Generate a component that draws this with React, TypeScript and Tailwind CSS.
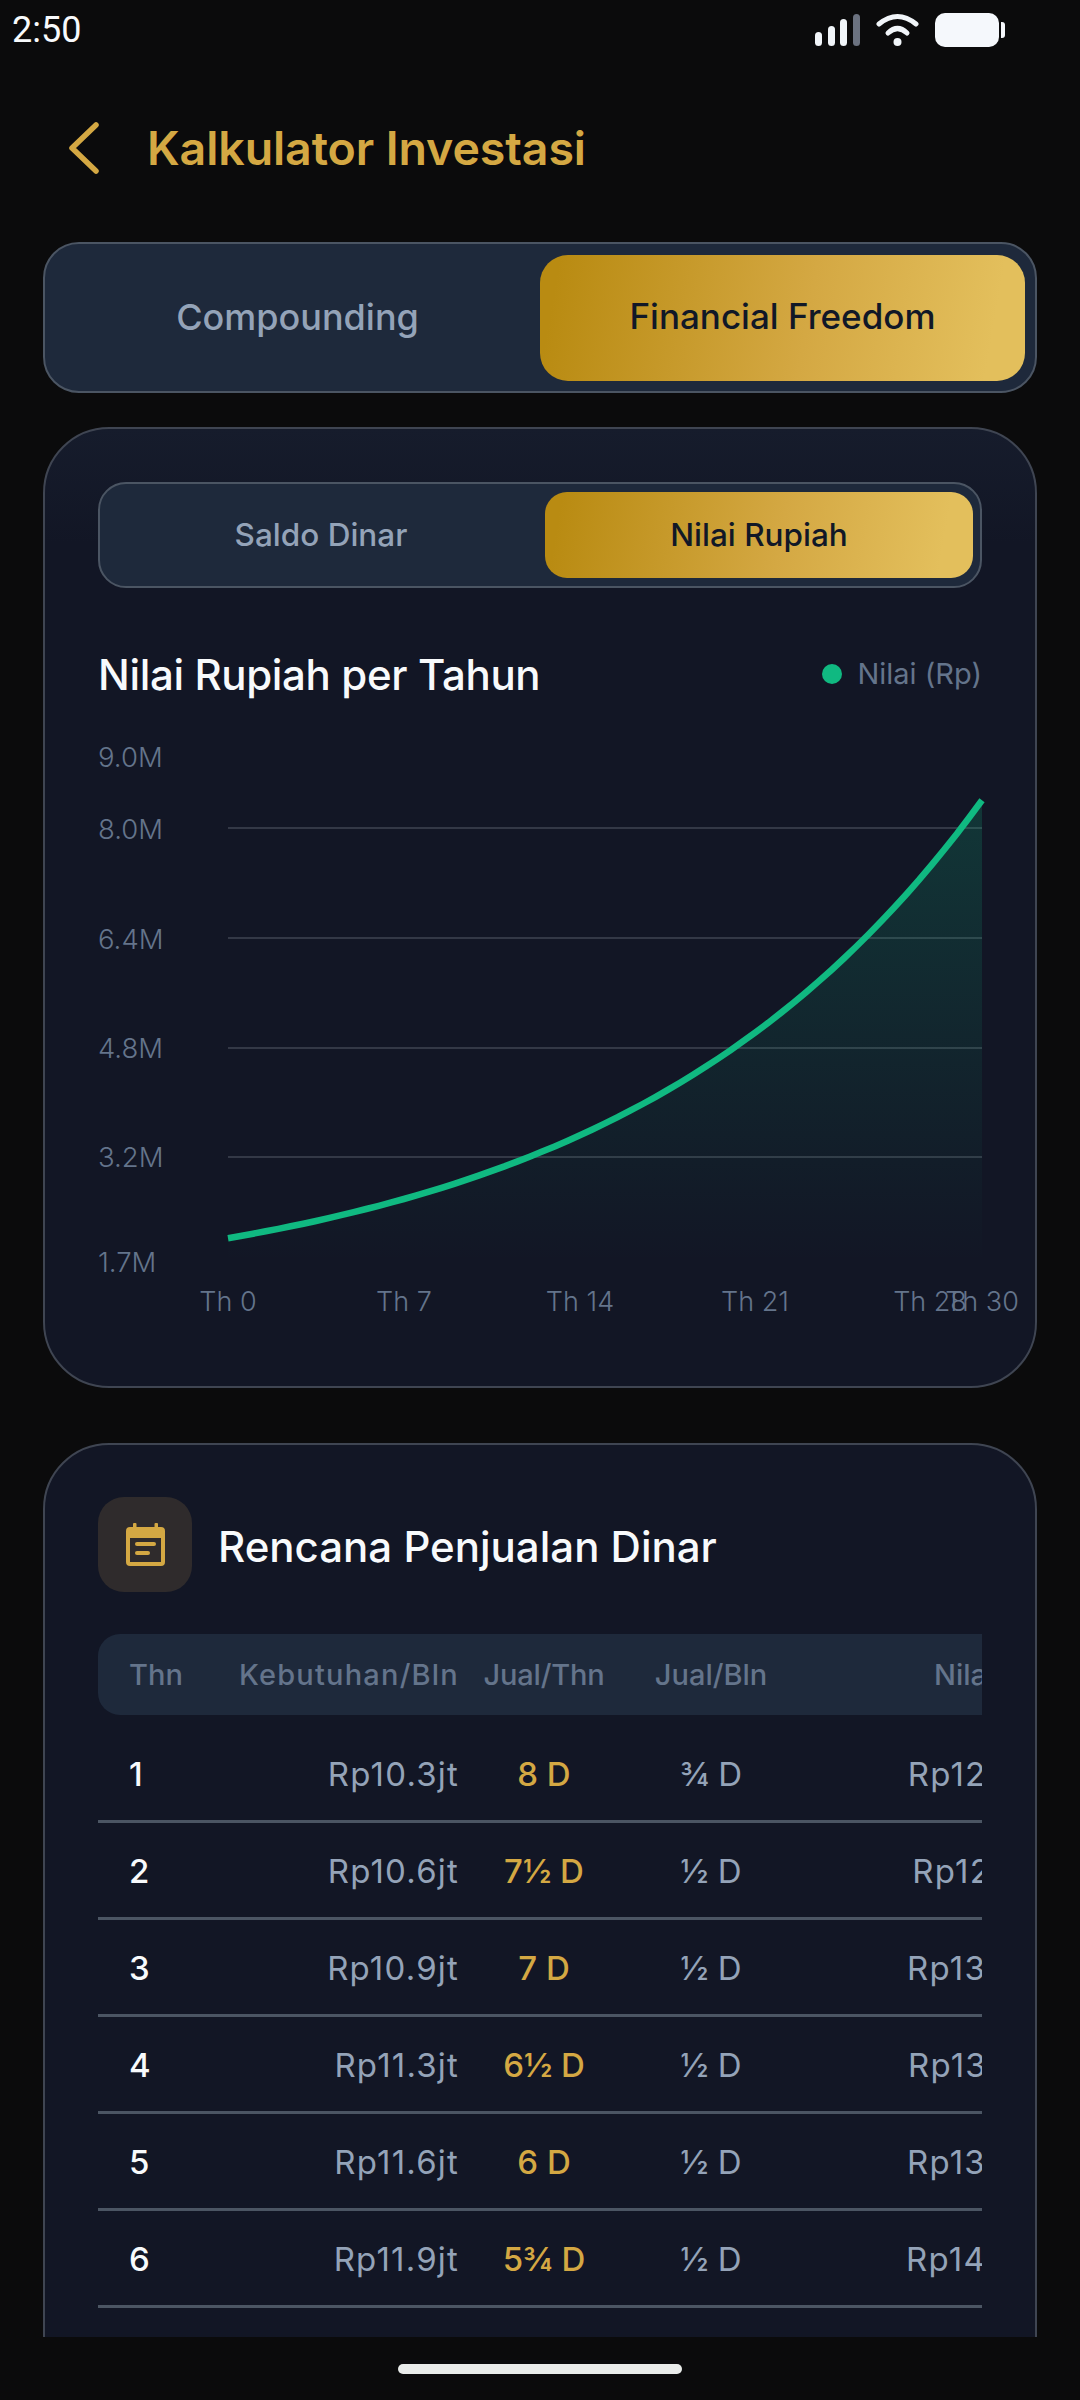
import React from "react";

const Pts = () => {
  const p: string[] = [];
  for (let i = 0; i <= 60; i++) {
    const t = i / 2;
    const v = 2.02 + 0.922 * (Math.exp(0.069 * t) - 1);
    const x = 228 + (t / 30) * 754;
    const y = 828 + (8 - v) * 68.6;
    p.push(`${x.toFixed(1)},${y.toFixed(1)}`);
  }
  return p;
};

function StatusIcons() {
  return (
    <svg width="192" height="36" viewBox="815 13 192 36" fill="none">
      <rect x="815" y="33" width="7" height="14" rx="3.5" fill="#F1F5F9" />
      <rect x="828" y="27" width="7" height="20" rx="3.5" fill="#F1F5F9" />
      <rect x="840" y="20" width="7" height="27" rx="3.5" fill="#F1F5F9" />
      <rect x="853" y="15" width="7" height="32" rx="3.5" fill="#6B7280" />
      <path d="M879 25Q897.5 10 916 25" stroke="#F1F5F9" strokeWidth="5" strokeLinecap="round" />
      <path d="M888 34Q897.5 25 907 34" stroke="#F1F5F9" strokeWidth="5" strokeLinecap="round" />
      <circle cx="897.5" cy="43" r="4" fill="#F1F5F9" />
      <rect x="935" y="14" width="64" height="34" rx="10" fill="#F5F8FC" />
      <path d="M1001 23h1a3 3 0 0 1 3 3v10a3 3 0 0 1-3 3h-1z" fill="#F5F8FC" />
    </svg>
  );
}

function Segmented({ left, right, big }: { left: string; right: string; big?: boolean }) {
  return (
    <div
      className={
        big
          ? "flex h-[151px] rounded-[36px] border-2 border-[#4B5563] bg-[#1E293B] px-[10px] py-[10.5px]"
          : "flex h-[106px] gap-[10px] rounded-[28px] border-2 border-[#4B5563] bg-[#1E293B] px-[7px] py-[8px]"
      }
    >
      <div className={big ? "flex flex-1 items-center justify-center pb-[2px] text-[36px] font-medium text-[#94A3B8]" : "flex flex-1 items-center justify-center text-[31.5px] font-medium text-[#94A3B8]"}>
        {left}
      </div>
      <div
        className={
          big
            ? "flex flex-1 items-center justify-center rounded-[28px] bg-[linear-gradient(100deg,#b98b12_4%,#d4a843_55%,#e3bf5c_92%)] pb-[2px] text-[35px] font-medium text-[#111827]"
            : "flex flex-1 items-center justify-center rounded-[22px] bg-[linear-gradient(100deg,#b98b12_4%,#d4a843_55%,#e3bf5c_92%)] text-[31.5px] font-medium text-[#111827]"
        }
      >
        {right}
      </div>
    </div>
  );
}

function Chart() {
  const pts = Pts();
  const line = "M" + pts.join("L");
  const area = line + "L982,1262L228,1262Z";
  const yl: [string, number][] = [
    ["9.0M", 767],
    ["8.0M", 839],
    ["6.4M", 949],
    ["4.8M", 1058],
    ["3.2M", 1167],
    ["1.7M", 1272],
  ];
  const xl: [string, number][] = [
    ["Th 0", 228],
    ["Th 7", 404],
    ["Th 14", 580],
    ["Th 21", 755],
    ["Th 28", 930],
    ["Th 30", 982],
  ];
  return (
    <svg width="884" height="593" viewBox="98 740 884 593" className="mt-[36px] overflow-visible">
      <defs>
        <linearGradient id="ar" x1="0" y1="800" x2="0" y2="1262" gradientUnits="userSpaceOnUse">
          <stop offset="0" stopColor="#10B981" stopOpacity="0.2" />
          <stop offset="1" stopColor="#10B981" stopOpacity="0" />
        </linearGradient>
      </defs>
      {[828, 938, 1048, 1157].map((y) => (
        <line key={y} x1="228" x2="982" y1={y} y2={y} stroke="#3F4552" strokeWidth="1.5" />
      ))}
      <path d={area} fill="url(#ar)" />
      <path d={line} fill="none" stroke="#10B981" strokeWidth="6.5" />
      {yl.map(([t, y]) => (
        <text key={t} x="98" y={y} fill="#64748B" fontSize="27.5" fontWeight="300">
          {t}
        </text>
      ))}
      {xl.map(([t, x]) => (
        <text key={t} x={x} y="1311" textAnchor="middle" fill="#64748B" fontSize="27" fontWeight="300">
          {t}
        </text>
      ))}
    </svg>
  );
}

const rows = [
  ["1", "Rp10.3jt", "8 D", "¾ D", "Rp123.6jt"],
  ["2", "Rp10.6jt", "7½ D", "½ D", "Rp127.2jt"],
  ["3", "Rp10.9jt", "7 D", "½ D", "Rp130.8jt"],
  ["4", "Rp11.3jt", "6½ D", "½ D", "Rp135.6jt"],
  ["5", "Rp11.6jt", "6 D", "½ D", "Rp139.2jt"],
  ["6", "Rp11.9jt", "5¾ D", "½ D", "Rp142.8jt"],
];

function Table() {
  return (
    <div className="mt-[42px] overflow-hidden">
      <div className="w-[962px]">
        <div className="flex h-[81px] items-center rounded-l-[22px] bg-[#1E293B] pl-[31px] text-[29px] font-medium text-[#64748B]">
          <div className="w-[100px] shrink-0">Thn</div>
          <div className="w-[230px] shrink-0 whitespace-nowrap text-right tracking-[1.2px]">Kebutuhan/Bln</div>
          <div className="w-[170px] shrink-0 text-center tracking-[-0.2px]">Jual/Thn</div>
          <div className="w-[164px] shrink-0 text-center">Jual/Bln</div>
          <div className="w-[267px] shrink-0 text-right">Nilai (Rp)</div>
        </div>
        <div className="mt-[11px]">
          {rows.map((r) => (
            <div key={r[0]} className="flex h-[97px] items-center border-b-[3px] border-[#4B5563] pl-[31px] pt-[4px] text-[33px]">
              <div className="w-[100px] shrink-0 font-medium text-[#F8FAFC]">{r[0]}</div>
              <div className="w-[230px] shrink-0 text-right tracking-[1.2px] text-[#94A3B8]">{r[1]}</div>
              <div className="w-[170px] shrink-0 text-center font-medium text-[#D4A843]">{r[2]}</div>
              <div className="w-[164px] shrink-0 text-center text-[#94A3B8]">{r[3]}</div>
              <div className="w-[267px] shrink-0 whitespace-nowrap text-right tracking-[1.2px] text-[#94A3B8]">{r[4]}</div>
            </div>
          ))}
        </div>
      </div>
    </div>
  );
}

export default function App() {
  return (
    <div className="flex h-[2400px] w-[1080px] flex-col overflow-hidden bg-[#0B0B0C] font-['Inter',sans-serif]">
      <div className="flex h-[60px] shrink-0 items-center justify-between pl-[12px] pr-[73px]">
        <span className="font-['Roboto',sans-serif] text-[36px] text-[#F8FAFC]">2:50</span>
        <StatusIcons />
      </div>
      <div className="flex h-[182px] shrink-0 items-center pb-[6px] pl-[66px]">
        <svg width="36" height="56" viewBox="0 0 36 56" fill="none">
          <path d="M30 5L6 28L30 51" stroke="#D4A843" strokeWidth="5.5" strokeLinecap="round" strokeLinejoin="round" />
        </svg>
        <h1 className="ml-[45px] pt-[2px] text-[46.5px] font-semibold tracking-[-0.1px] text-[#D4A843]">Kalkulator Investasi</h1>
      </div>
      <div className="min-h-0 flex-1 overflow-hidden px-[43px]">
        <Segmented big left="Compounding" right="Financial Freedom" />
        <div className="mt-[34px] h-[961px] rounded-[66px] border-2 border-[#3F4552] bg-[linear-gradient(180deg,#161c2c,#121625_12%)] px-[53px] pt-[53px]">
          <Segmented left="Saldo Dinar" right="Nilai Rupiah" />
          <div className="mt-[56px] flex h-[60px] items-center justify-between">
            <span className="text-[42px] font-medium tracking-[-0.35px] text-[#F8FAFC]">Nilai Rupiah per Tahun</span>
            <span className="flex items-center gap-[15px] text-[29px] text-[#64748B]">
              <span className="h-[20px] w-[20px] rounded-full bg-[#10B981]" />
              Nilai (Rp)
            </span>
          </div>
          <Chart />
        </div>
        <div className="mt-[55px] rounded-t-[66px] border-2 border-[#3F4552] bg-[#121625] px-[53px] pb-[120px] pt-[52px]">
          <div className="flex items-center gap-[26px]">
            <div className="flex h-[95px] w-[94px] items-center justify-center rounded-[26px] bg-[#2F2B2C]">
              <svg width="39" height="43" viewBox="0 0 39 43" fill="#D4A843">
                <rect x="7" y="0" width="3.5" height="6" rx="1" />
                <rect x="28.5" y="0" width="3.5" height="6" rx="1" />
                <path fillRule="evenodd" d="M4 4h31a4 4 0 0 1 4 4v31a4 4 0 0 1-4 4H4a4 4 0 0 1-4-4V8a4 4 0 0 1 4-4zM4 15v24h31V15z" />
                <rect x="9" y="19" width="21" height="4" rx="2" />
                <rect x="9" y="28" width="15" height="4" rx="2" />
              </svg>
            </div>
            <span className="pt-[3px] text-[42px] font-medium text-[#F8FAFC]">Rencana Penjualan Dinar</span>
          </div>
          <Table />
        </div>
      </div>
      <div className="flex h-[63px] shrink-0 justify-center bg-[#0B0B0C] pt-[27px]">
        <div className="h-[10px] w-[284px] rounded-[5px] bg-[#E9ECEA]" />
      </div>
    </div>
  );
}
